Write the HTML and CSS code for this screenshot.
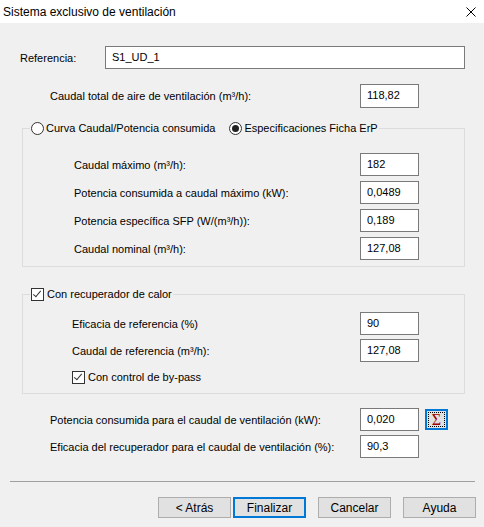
FILE: index.html
```html
<!DOCTYPE html>
<html lang="es">
<head>
    <meta charset="UTF-8">
    <title>Sistema exclusivo de ventilación</title>
    <link rel="stylesheet" href="styles.css">
</head>
<body>
    <div class="window">
        <header class="titlebar">
            <span class="title">Sistema exclusivo de ventilación</span>
            <svg class="close" width="10" height="10" viewBox="0 0 10 10">
                <path d="M0.5 0.5 L9.5 9.5 M9.5 0.5 L0.5 9.5" stroke="#000" stroke-width="1" fill="none"/>
            </svg>
        </header>

        <main class="content">
            <div class="row row-ref">
                <label class="label-ref">Referencia:</label>
                <input class="field field-wide" type="text" value="S1_UD_1">
            </div>

            <div class="row row-main">
                <label class="label">Caudal total de aire de ventilación (m³/h):</label>
                <input class="field field-tall" type="text" value="118,82">
            </div>

            <fieldset class="group group-fan">
                <legend>
                    <span class="option"><span class="radio"></span>Curva Caudal/Potencia consumida</span>
                    <span class="option option-second"><span class="radio checked"></span>Especificaciones Ficha ErP</span>
                </legend>
                <div class="group-body">
                    <div class="row">
                        <label class="label">Caudal máximo (m³/h):</label>
                        <input class="field" type="text" value="182">
                    </div>
                    <div class="row">
                        <label class="label">Potencia consumida a caudal máximo (kW):</label>
                        <input class="field" type="text" value="0,0489">
                    </div>
                    <div class="row">
                        <label class="label">Potencia específica SFP (W/(m³/h)):</label>
                        <input class="field" type="text" value="0,189">
                    </div>
                    <div class="row">
                        <label class="label">Caudal nominal (m³/h):</label>
                        <input class="field" type="text" value="127,08">
                    </div>
                </div>
            </fieldset>

            <fieldset class="group group-heat">
                <legend>
                    <span class="option"><span class="check checked"></span>Con recuperador de calor</span>
                </legend>
                <div class="group-body">
                    <div class="row">
                        <label class="label">Eficacia de referencia (%)</label>
                        <input class="field" type="text" value="90">
                    </div>
                    <div class="row">
                        <label class="label">Caudal de referencia (m³/h):</label>
                        <input class="field" type="text" value="127,08">
                    </div>
                    <div class="option option-bypass"><span class="check checked"></span>Con control de by-pass</div>
                </div>
            </fieldset>

            <div class="row row-main row-power">
                <label class="label">Potencia consumida para el caudal de ventilación (kW):</label>
                <input class="field" type="text" value="0,020">
                <button class="sigma" type="button"><span class="sigma-inner">Σ</span></button>
            </div>
            <div class="row row-main">
                <label class="label">Eficacia del recuperador para el caudal de ventilación (%):</label>
                <input class="field" type="text" value="90,3">
            </div>

            <hr class="separator">

            <div class="buttons">
                <button class="btn" type="button">&lt; Atrás</button>
                <button class="btn btn-default" type="button">Finalizar</button>
                <button class="btn btn-gap" type="button">Cancelar</button>
                <button class="btn btn-gap" type="button">Ayuda</button>
            </div>
        </main>
    </div>
</body>
</html>
```

FILE: styles.css
```css
body {
    margin: 0;
    font-family: "Liberation Sans", Arial, sans-serif;
    font-size: 11px;
    color: #000;
    background-color: #f0f0f0;
}

.window {
    width: 484px;
    height: 527px;
    background-color: #f0f0f0;
    overflow: hidden;
}

.titlebar {
    height: 23px;
    background-color: #fff;
    display: flex;
    align-items: center;
    justify-content: space-between;
    padding: 0 8px 0 3px;
}

.title {
    font-size: 12px;
}

.close {
    margin-top: 1px;
}

.content {
    padding-top: 23px;
}

.row {
    display: flex;
    align-items: center;
    height: 23px;
}

.label {
    white-space: nowrap;
}

.field {
    box-sizing: border-box;
    height: 23px;
    width: 59px;
    margin: 0;
    padding: 0 0 1px 6px;
    border: 1px solid #7a7a7a;
    background-color: #fff;
    font-family: inherit;
    font-size: 11px;
    color: #000;
    outline: none;
}

.row-ref {
    padding-left: 20px;
}

.label-ref {
    width: 85px;
}

.field-wide {
    width: 360px;
}

.row-main {
    padding-left: 50px;
    margin-top: 15px;
}

.row-main .label {
    width: 310px;
}

.field-tall {
    height: 24px;
}

.group {
    margin: 0 0 0 22px;
    width: 443px;
    box-sizing: border-box;
    border: 1px solid #dcdcdc;
    padding: 0;
}

.group legend {
    padding: 0 1px;
    margin-left: 7px;
    display: flex;
    height: 15px;
    align-items: center;
}

.group-fan {
    margin-top: 14px;
}

.group-fan .group-body {
    padding: 17px 0 6px 51px;
}

.group-fan .row + .row {
    margin-top: 5px;
}

.group-fan .label {
    width: 286px;
}

.group-heat {
    margin-top: 20px;
}

.group-heat .group-body {
    padding: 10px 0 8px 49px;
}

.group-heat .row + .row {
    margin-top: 4px;
}

.group-heat .label {
    width: 288px;
}

.option {
    display: flex;
    align-items: center;
    white-space: nowrap;
    line-height: 15px;
}

.option-second {
    margin-left: 14px;
}

.option-bypass {
    margin-top: 8px;
    height: 15px;
}

.radio {
    box-sizing: border-box;
    width: 13px;
    height: 13px;
    border: 1px solid #333;
    border-radius: 50%;
    background-color: #fff;
    margin-right: 2px;
    display: flex;
    align-items: center;
    justify-content: center;
}

.radio.checked::after {
    content: "";
    width: 7px;
    height: 7px;
    border-radius: 50%;
    background-color: #222;
}

.check {
    box-sizing: border-box;
    width: 13px;
    height: 13px;
    border: 1px solid #333;
    background-color: #fff;
    margin-right: 3px;
    position: relative;
}

.check.checked::after {
    content: "";
    position: absolute;
    left: 3px;
    top: 0px;
    width: 3px;
    height: 7px;
    border-right: 1px solid #333;
    border-bottom: 1px solid #333;
    transform: rotate(40deg);
}

.row-power {
    margin-top: 14px;
}

.row-power + .row-main {
    margin-top: 4px;
}

.sigma {
    box-sizing: border-box;
    width: 23px;
    height: 21px;
    margin-left: 6px;
    padding: 1px;
    border: 2px solid #0078d7;
    background-color: #e1e1e1;
    display: flex;
}

.sigma-inner {
    flex: 1;
    border: 1px dotted #000;
    color: #a00000;
    font-family: "Liberation Serif", serif;
    font-size: 16px;
    line-height: 13px;
    text-align: center;
}

.separator {
    margin: 23px 9px 0 10px;
    border: none;
    border-top: 1px solid #a0a0a0;
    height: 0;
}

.buttons {
    display: flex;
    justify-content: flex-end;
    padding-right: 8px;
    margin-top: 15px;
}

.btn {
    box-sizing: border-box;
    width: 73px;
    height: 21px;
    margin: 0;
    padding: 0;
    border: 1px solid #adadad;
    background-color: #e1e1e1;
    font-family: inherit;
    font-size: 12px;
    color: #000;
}

.btn-default {
    margin-left: 2px;
    border: 2px solid #0078d7;
}

.btn-gap {
    margin-left: 12px;
}
```
